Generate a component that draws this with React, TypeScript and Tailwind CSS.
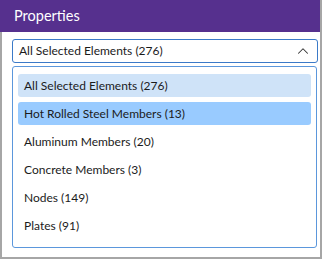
import { ChevronUp } from "lucide-react";

const ITEMS = [
  "All Selected Elements (276)",
  "Hot Rolled Steel Members (13)",
  "Aluminum Members (20)",
  "Concrete Members (3)",
  "Nodes (149)",
  "Plates (91)",
];

export default function App() {
  return (
    <div
      className="flex h-[259px] w-[322px] flex-col bg-[#a6a6a6] text-[12px] text-[#1b1b1b]"
      style={{ fontFamily: '"Segoe UI", Lato, sans-serif' }}
    >
      {/* Header */}
      <div className="flex h-8 w-[320px] shrink-0 items-center bg-[#56308e] pl-[14px] text-[14.5px] text-white">
        Properties
      </div>

      {/* Body */}
      <div className="ml-[2px] flex h-[225px] w-[318px] flex-col bg-white pl-[10px] pr-[2px] pt-[7px]">
        <button className="flex h-6 w-[306px] items-center justify-between rounded-[3px] border-[1.5px] border-[#3b7ac8] pl-[6px] pr-[5px] text-left">
          <span>All Selected Elements (276)</span>
          <ChevronUp className="h-[18px] w-[18px] text-[#333]" strokeWidth={1.4} />
        </button>

        <div className="mt-[3px] flex h-[182px] w-[305px] flex-col gap-[5px] rounded-[3px] border-[1.5px] border-[#5b97dc] px-[5px] pt-[7px]">
          {ITEMS.map((item, i) => (
            <div
              key={item}
              className={
                "flex h-[23px] shrink-0 items-center rounded-[3px] px-[6px] " +
                (i === 0 ? "bg-[#cfe3f8]" : i === 1 ? "bg-[#99cbff]" : "")
              }
            >
              {item}
            </div>
          ))}
        </div>
      </div>
    </div>
  );
}
